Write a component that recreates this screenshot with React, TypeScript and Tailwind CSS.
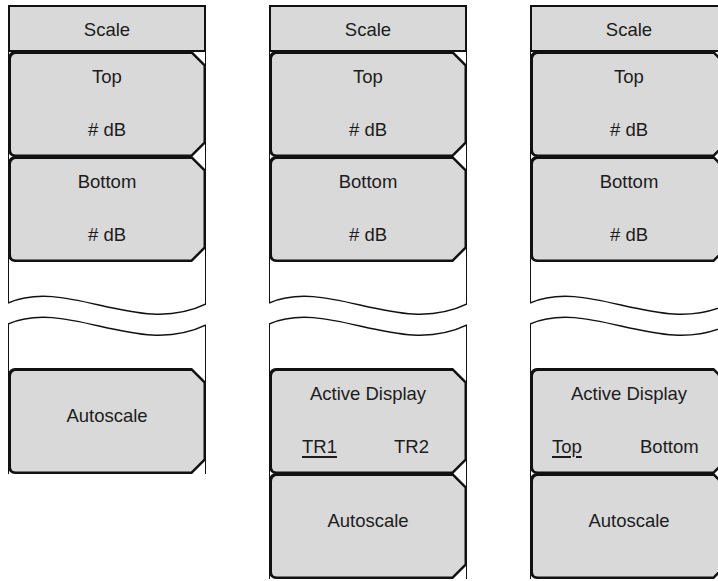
import type { ReactNode } from 'react';

// Soft-key menu diagrams: three "Scale" menus side by side

type Option = { text: string; underline?: boolean };

function SoftKey({ first, children, center }: { first?: boolean; children: ReactNode; center?: boolean }) {
  return (
    <div
      className={`relative -mx-px h-[106px] rounded-l-[7px] bg-[#111] [clip-path:polygon(0_0,calc(100%_-_14px)_0,100%_14px,100%_calc(100%_-_14px),calc(100%_-_14px)_100%,0_100%)] ${first ? '' : '-mt-px'}`}
    >
      <div
        className={`absolute inset-[2.5px] rounded-l-[5px] bg-[#d9d9d9] [clip-path:polygon(0_0,calc(100%_-_12.5px)_0,100%_12.5px,100%_calc(100%_-_12.5px),calc(100%_-_12.5px)_100%,0_100%)] flex flex-col ${
          center ? 'items-center justify-center pb-[10px]' : 'pt-[12.5px] gap-[31px]'
        }`}
      >
        {children}
      </div>
    </div>
  );
}

function ValueKey({ label, value, first }: { label: string; value: string; first?: boolean }) {
  return (
    <SoftKey first={first}>
      <span className="text-center leading-[22px]">{label}</span>
      <span className="text-center leading-[22px]">{value}</span>
    </SoftKey>
  );
}

function ToggleKey({ label, options, wide }: { label: string; options: Option[]; wide?: boolean }) {
  return (
    <SoftKey first>
      <span className="text-center leading-[22px]">{label}</span>
      <div className={`flex leading-[22px] ${wide ? 'pl-[19.5px]' : 'pl-[30.5px]'}`}>
        {options.map((o, i) => (
          <span
            key={o.text}
            className={`${i === 0 ? (wide ? 'w-[88px]' : 'w-[92px]') : ''} ${
              o.underline ? 'underline decoration-[1.5px] underline-offset-[3px]' : ''
            }`}
          >
            {o.text}
          </span>
        ))}
      </div>
    </SoftKey>
  );
}

function Break() {
  // torn-off section of the menu column
  return (
    <svg width="198" height="106" viewBox="0 0 198 106" className="block">
      <path d="M0.5 0 V41 M197.5 0 V42" stroke="#111" strokeWidth="1" fill="none" />
      <path d="M0 41 C60 15 130 75 198 42" stroke="#111" strokeWidth="1.4" fill="none" />
      <path d="M0 62 C60 36 130 96 198 63" stroke="#111" strokeWidth="1.4" fill="none" />
      <path d="M0.5 62 V106 M197.5 63 V106" stroke="#111" strokeWidth="1" fill="none" />
    </svg>
  );
}

function Menu({ active }: { active?: { options: Option[]; wide?: boolean } }) {
  return (
    <div className="w-[198px] shrink-0 flex flex-col">
      <div className="h-[47px] border-[2.5px] border-[#111] bg-[#d9d9d9] flex items-center justify-center pt-[3px] leading-[22px]">
        Scale
      </div>
      <div className="border-x border-[#111]">
        <ValueKey label="Top" value="# dB" />
        <ValueKey label="Bottom" value="# dB" />
      </div>
      <Break />
      <div className="border-x border-[#111]">
        {active && <ToggleKey label="Active Display" options={active.options} wide={active.wide} />}
        <SoftKey first={!active} center>
          <span className="leading-[22px]">Autoscale</span>
        </SoftKey>
      </div>
    </div>
  );
}

export default function App() {
  return (
    <div className="w-[718px] h-[581px] overflow-hidden bg-white text-[#1c1c1c] text-[18.5px] font-['Liberation_Sans',Arial,sans-serif]">
      <div className="flex items-start gap-[63px] pl-[8px] pt-[5px]">
        <Menu />
        <Menu active={{ options: [{ text: 'TR1', underline: true }, { text: 'TR2' }] }} />
        <Menu active={{ options: [{ text: 'Top', underline: true }, { text: 'Bottom' }], wide: true }} />
      </div>
    </div>
  );
}
